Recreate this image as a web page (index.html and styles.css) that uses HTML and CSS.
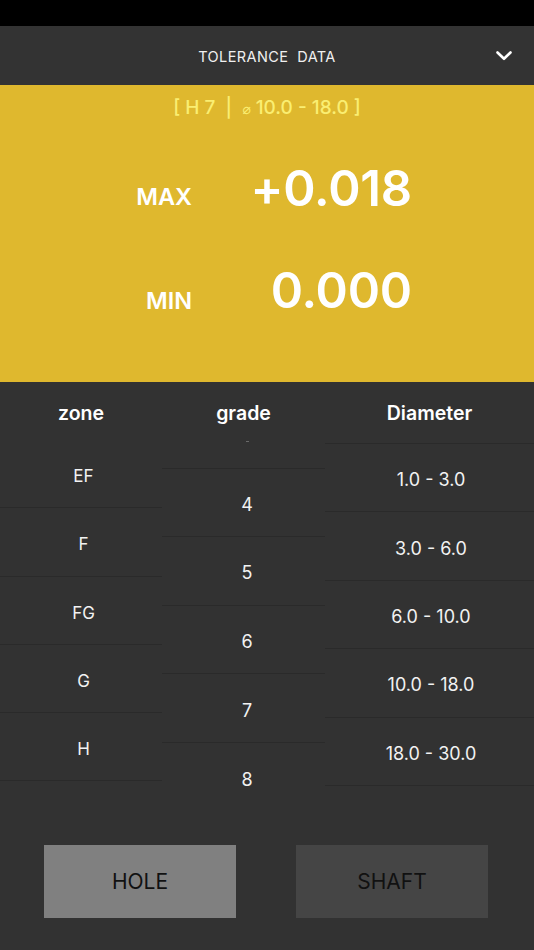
FILE: index.html
```html
<!DOCTYPE html>
<html>
<head>
<meta charset="utf-8">
<link rel="stylesheet" href="styles.css">
</head>
<body>
<div class="app">
  <div class="status"></div>
  <header class="topbar">
    <div></div>
    <div class="title">TOLERANCE&nbsp; DATA</div>
    <div class="chev">
      <svg width="16" height="10" viewBox="0 0 16 10"><path d="M1.5 1.5 L8 7.8 L14.5 1.5" fill="none" stroke="#fff" stroke-width="2.6" stroke-linecap="round" stroke-linejoin="round"/></svg>
    </div>
  </header>
  <section class="result">
    <div class="spec">[ H 7&nbsp; |&nbsp; <span class="dia">⌀</span> 10.0 - 18.0 ]</div>
    <div class="row row-max"><span class="lbl">MAX</span><span class="val">+0.018</span></div>
    <div class="row row-min"><span class="lbl">MIN</span><span class="val">0.000</span></div>
  </section>
  <section class="table">
    <div class="thead">
      <div class="th c-zone">zone</div>
      <div class="th c-grade">grade</div>
      <div class="th c-dia">Diameter</div>
    </div>
    <div class="tbody">
      <div class="col c-zone">
        <div class="list list-zone">
          <div class="cell">EF</div>
          <div class="cell">F</div>
          <div class="cell">FG</div>
          <div class="cell">G</div>
          <div class="cell">H</div>
        </div>
      </div>
      <div class="col c-grade">
        <div class="list list-grade">
          <div class="cell cell-hidden"><span class="tick"></span></div>
          <div class="cell">4</div>
          <div class="cell">5</div>
          <div class="cell">6</div>
          <div class="cell">7</div>
          <div class="cell">8</div>
        </div>
      </div>
      <div class="col c-dia">
        <div class="list list-dia">
          <div class="cell">1.0 - 3.0</div>
          <div class="cell">3.0 - 6.0</div>
          <div class="cell">6.0 - 10.0</div>
          <div class="cell">10.0 - 18.0</div>
          <div class="cell">18.0 - 30.0</div>
        </div>
      </div>
    </div>
  </section>
  <footer class="buttons">
    <button class="btn btn-hole">HOLE</button>
    <button class="btn btn-shaft">SHAFT</button>
  </footer>
</div>
</body>
</html>
```
FILE: styles.css
```css
* { box-sizing: border-box; }
html, body { margin: 0; padding: 0; }
body {
  width: 534px;
  height: 950px;
  overflow: hidden;
  background: #323232;
  font-family: Inter, "Liberation Sans", sans-serif;
  color: #f2f2f2;
}
.app { display: flex; flex-direction: column; height: 950px; }
.status { height: 26px; background: #000; }
.topbar {
  height: 59px;
  background: #333333;
  display: grid;
  grid-template-columns: 1fr auto 1fr;
  align-items: center;
}
.title {
  font-size: 14.5px;
  letter-spacing: 0.4px;
  color: #f0f0f0;
  padding-top: 2px;
}
.chev { justify-self: end; padding-right: 22px; display: flex; padding-top: 1px; }
.result {
  height: 297px;
  background: #dfb82e;
  display: flex;
  flex-direction: column;
  padding-top: 10px;
}
.spec {
  height: 25px;
  line-height: 25px;
  text-align: center;
  font-size: 19px;
  color: #faee72;
  font-weight: 500;
}
.dia { font-family: "DejaVu Sans", sans-serif; font-size: 14px; font-weight: 400; }
.row {
  display: grid;
  grid-template-columns: 192px 220px;
  align-items: baseline;
  height: 58px;
  line-height: 58px;
  color: #fff;
}
.row-max { margin-top: 40px; }
.row-min { margin-top: 44px; }
.lbl { text-align: right; font-size: 23.5px; font-weight: 600; position: relative; top: -1px; }
.row-min .lbl { top: 1px; }
.val { text-align: right; font-size: 49px; font-weight: 600; letter-spacing: -0.2px; }
.table { display: flex; flex-direction: column; }
.thead { display: flex; height: 59px; align-items: center; padding-top: 3px; }
.th { text-align: center; font-size: 19.5px; font-weight: 600; color: #fff; }
.c-zone { width: 162px; }
.c-grade { width: 163px; }
.c-dia { width: 209px; }
.tbody { display: flex; height: 380px; }
.col { overflow: hidden; height: 380px; }
.list { display: flex; flex-direction: column; }
.cell {
  display: flex;
  align-items: center;
  justify-content: center;
  border-bottom: 1px solid #2a2a2a;
  color: #f2f2f2;
}
.list-zone { margin-top: -1px; }
.list-zone .cell { height: 68.3px; font-size: 17px; padding: 5px 0 0 5px; }
.list-grade { margin-top: -41px; }
.list-grade .cell { height: 68.6px; font-size: 18px; padding: 4px 0 0 7px; }
.list-grade .cell:last-child { border-bottom: none; }
.list-grade .cell-hidden { align-items: flex-end; padding-bottom: 26px; }
.tick { width: 3px; height: 2px; background: #6a6a6a; }
.list-dia { margin-top: 2px; border-top: 1px solid #2a2a2a; }
.list-dia .cell { height: 68.4px; font-size: 18px; padding: 4px 0 0 3px; }
.buttons {
  display: flex;
  justify-content: space-between;
  padding: 24px 46px 0 44px;
}
.btn {
  width: 192px;
  height: 73px;
  border: none;
  border-radius: 0;
  font-family: Inter, "Liberation Sans", sans-serif;
  font-size: 21px;
  color: #111;
  padding: 0;
}
.btn-hole { background: #808080; }
.btn-shaft { background: #454545; }
```
